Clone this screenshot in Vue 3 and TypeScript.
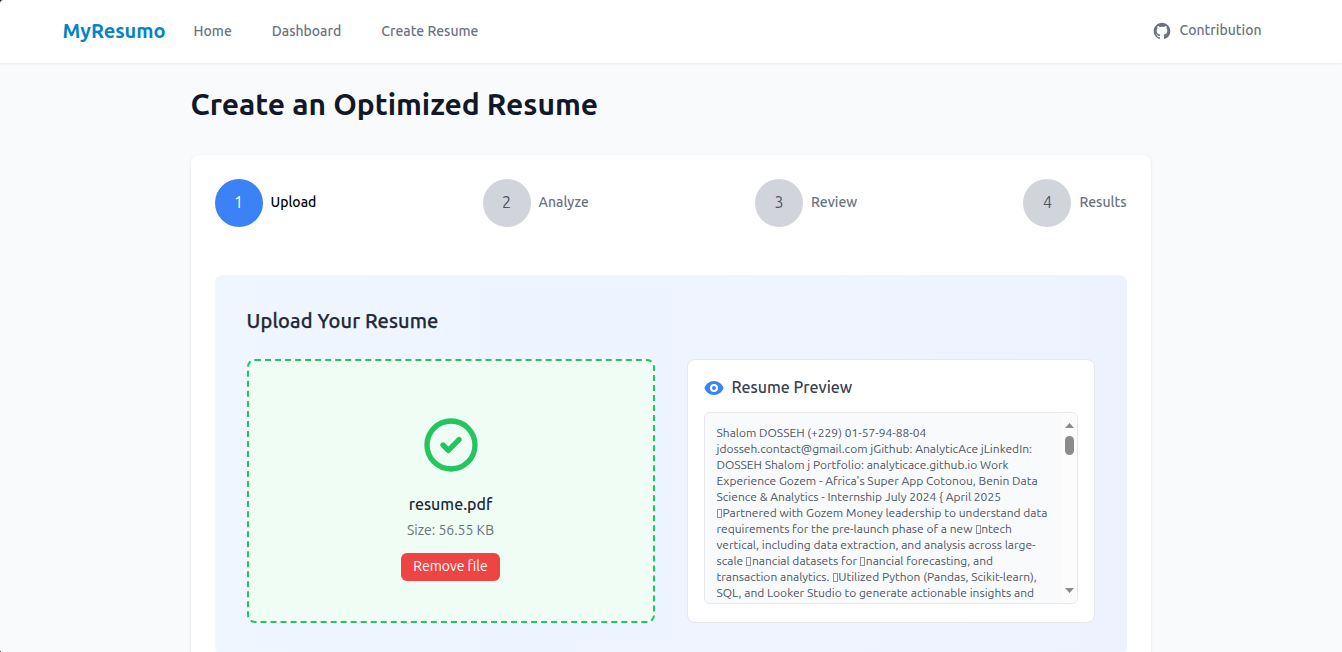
<script setup lang="ts">
interface Step { id: number; label: string; active: boolean }

const links: string[] = ['Home', 'Dashboard', 'Create Resume']

const steps: Step[] = [
  { id: 1, label: 'Upload', active: true },
  { id: 2, label: 'Analyze', active: false },
  { id: 3, label: 'Review', active: false },
  { id: 4, label: 'Results', active: false },
]

// "|" marks a character the extracted text has no glyph for.
const lines: string[] = [
  'Shalom DOSSEH (+229) 01-57-94-88-04',
  'jdosseh.contact@gmail.com jGithub: AnalyticAce jLinkedIn:',
  'DOSSEH Shalom j Portfolio: analyticace.github.io Work',
  "Experience Gozem - Africa's Super App Cotonou, Benin Data",
  'Science & Analytics - Internship July 2024 { April 2025',
  '|Partnered with Gozem Money leadership to understand data',
  'requirements for the pre-launch phase of a new |ntech',
  'vertical, including data extraction, and analysis across large-',
  'scale |nancial datasets for |nancial forecasting, and',
  'transaction analytics. |Utilized Python (Pandas, Scikit-learn),',
  'SQL, and Looker Studio to generate actionable insights and',
]
</script>

<template>
  <div class="page">
    <i class="corner top"></i>
    <i class="corner bottom"></i>
    <nav class="nav">
      <span class="brand">MyResumo</span>
      <div class="links">
        <a v-for="l in links" :key="l">{{ l }}</a>
      </div>
      <a class="contrib">
        <svg width="20" height="20" viewBox="0 0 24 24" fill="currentColor">
          <path fill-rule="evenodd" clip-rule="evenodd" d="M12 2C6.477 2 2 6.484 2 12.017c0 4.425 2.865 8.18 6.839 9.504.5.092.682-.217.682-.483 0-.237-.008-.868-.013-1.703-2.782.605-3.369-1.343-3.369-1.343-.454-1.158-1.11-1.466-1.11-1.466-.908-.62.069-.608.069-.608 1.003.07 1.531 1.032 1.531 1.032.892 1.53 2.341 1.088 2.91.832.092-.647.35-1.088.636-1.338-2.22-.253-4.555-1.113-4.555-4.951 0-1.093.39-1.988 1.029-2.688-.103-.253-.446-1.272.098-2.65 0 0 .84-.27 2.75 1.026A9.564 9.564 0 0112 6.844c.85.004 1.705.115 2.504.337 1.909-1.296 2.747-1.027 2.747-1.027.546 1.379.202 2.398.1 2.651.64.7 1.028 1.595 1.028 2.688 0 3.848-2.339 4.695-4.566 4.943.359.309.678.92.678 1.855 0 1.338-.012 2.419-.012 2.747 0 .268.18.58.688.482A10.019 10.019 0 0022 12.017C22 6.484 17.522 2 12 2z" />
        </svg>
        <span>Contribution</span>
      </a>
    </nav>

    <main class="main">
      <h1>Create an Optimized Resume</h1>
      <section class="card">
        <ol class="steps">
          <li v-for="s in steps" :key="s.id" :class="{ active: s.active }">
            <span class="dot">{{ s.id }}</span>
            <span class="label">{{ s.label }}</span>
          </li>
        </ol>

        <div class="panel">
          <h2>Upload Your Resume</h2>
          <div class="cols">
            <div class="drop">
              <svg width="64" height="64" viewBox="0 0 24 24" fill="none" stroke="currentColor" stroke-width="2" stroke-linecap="round" stroke-linejoin="round">
                <path d="M9 12l2 2 4-4m6 2a9 9 0 11-18 0 9 9 0 0118 0z" />
              </svg>
              <p class="file">resume.pdf</p>
              <p class="size">Size: 56.55 KB</p>
              <button class="remove">Remove file</button>
            </div>

            <div class="preview">
              <h3>
                <svg width="20" height="20" viewBox="0 0 20 20" fill="currentColor">
                  <path d="M10 12a2 2 0 100-4 2 2 0 000 4z" />
                  <path fill-rule="evenodd" clip-rule="evenodd" d="M.458 10C1.732 5.943 5.522 3 10 3s8.268 2.943 9.542 7c-1.274 4.057-5.064 7-9.542 7S1.732 14.057.458 10zM14 10a4 4 0 11-8 0 4 4 0 018 0z" />
                </svg>
                <span>Resume Preview</span>
              </h3>
              <div class="text">
                <div class="lines">
                  <div v-for="(line, i) in lines" :key="i" class="line">
                    <template v-for="(part, j) in line.split('|')" :key="j"><i v-if="j > 0" class="tofu"></i><span>{{ part }}</span></template>
                  </div>
                </div>
                <div class="bar">
                  <svg width="9" height="5" viewBox="0 0 9 5"><path d="M4.5 0L9 5H0z" fill="#8b8b8b" /></svg>
                  <span class="thumb"></span>
                  <svg class="down" width="9" height="5" viewBox="0 0 9 5"><path d="M0 0H9L4.5 5z" fill="#8b8b8b" /></svg>
                </div>
              </div>
            </div>
          </div>
        </div>
      </section>
    </main>
  </div>
</template>

<style>
body { margin: 0; overflow: hidden; }
</style>

<style scoped>
.page {
  position: relative;
  height: 652px;
  overflow: hidden;
  background: #f9fafb;
  font-family: Ubuntu, "Noto Sans", sans-serif;
  font-size: 14px;
  color: #6b7280;
}
.page span, .page a { white-space: pre; }
.corner { position: absolute; left: 0; width: 3px; height: 3px; z-index: 2; }
.top { top: 0; background: radial-gradient(circle at 100% 100%, transparent 2.4px, #222 3.4px); }
.bottom { bottom: 0; height: 1px; width: 1px; background: #555; }
.nav {
  position: relative;
  box-sizing: border-box;
  height: 63px;
  padding: 0 80.5px 0 62.5px;
  display: flex;
  align-items: center;
  background: #fff;
  box-shadow: 0 1px 2px rgba(0, 0, 0, 0.07);
}
.brand { font-size: 20px; font-weight: 600; color: #0284c7; line-height: 28px; margin-top: -1px; }
.links { display: flex; gap: 40px; margin: -1px 0 0 28px; }
.links, .contrib { font-weight: 500; line-height: 20px; }
.contrib { display: flex; gap: 8px; margin: -1px 0 0 auto; align-items: center; }
.contrib span { margin-top: -2px; }
.main { width: 960px; margin-left: 190.5px; }
h1, h2, h3, p, ol { margin: 0; padding: 0; }
h1 { padding-top: 23px; font-size: 30px; line-height: 36px; font-weight: 600; color: #111827; }
.card {
  margin-top: 33px;
  height: 560px;
  padding: 24px;
  border-radius: 8px;
  background: #fff;
  box-shadow: 0 1px 3px rgba(0, 0, 0, 0.1), 0 1px 2px -1px rgba(0, 0, 0, 0.1);
  box-sizing: border-box;
}
.steps { display: flex; justify-content: space-between; list-style: none; }
.steps li { display: flex; align-items: center; gap: 8px; font-weight: 500; }
.label { margin-top: -2px; line-height: 20px; }
.dot {
  width: 48px;
  height: 48px;
  border-radius: 50%;
  background: #d1d5db;
  color: #4b5563;
  font-size: 16px;
  font-weight: 400;
  line-height: 46px;
  text-align: center;
}
.active { color: #000; }
.active .dot { background: #3b82f6; color: #fff; }
.panel {
  margin-top: 48px;
  padding: 32px;
  border-radius: 8px;
  background: linear-gradient(to right, #eff6ff, #eef2ff);
}
h2 { font-size: 20px; line-height: 28px; font-weight: 500; letter-spacing: 0.12px; color: #1f2937; -webkit-text-stroke: 0.25px #1f2937; }
.cols { display: grid; grid-template-columns: 1fr 1fr; gap: 32px; margin-top: 24px; }
.drop {
  box-sizing: border-box;
  height: 264px;
  border: 2px dashed #22c55e;
  border-radius: 8px;
  background: #f0fdf4;
  color: #22c55e;
  display: flex;
  flex-direction: column;
  align-items: center;
  padding-top: 52px;
}
.drop svg { display: block; }
.file { margin-top: 15px; font-size: 16px; line-height: 24px; font-weight: 500; color: #1f2937; }
.size { margin-top: 4px; line-height: 20px; color: #6b7280; }
.remove {
  margin-top: 13px;
  padding: 3px 12px 5px;
  border: 0;
  border-radius: 6px;
  background: #ef4444;
  color: #fff;
  font: inherit;
  line-height: 20px;
}
.preview {
  box-sizing: border-box;
  height: 264px;
  padding: 15px 16px;
  border: 1px solid #e5e7eb;
  border-radius: 8px;
  background: #fff;
}
h3 { display: flex; align-items: center; gap: 8px; height: 24px; font-size: 16px; line-height: 24px; font-weight: 500; color: #374151; }
h3 svg { color: #3b82f6; margin-top: 2px; }
.text {
  box-sizing: border-box;
  display: flex;
  justify-content: space-between;
  height: 192px;
  margin-top: 13px;
  border: 1px solid #e5e7eb;
  border-radius: 6px;
  background: #f9fafb;
  overflow: hidden;
}
.lines { padding: 12px 0 0 12px; font-size: 12px; line-height: 16px; color: #4b5563; }
.line { height: 16px; }
.tofu { display: inline-block; box-sizing: border-box; width: 5px; height: 9px; margin: 0 0.5px; border: 1px solid #8b919c; vertical-align: -1px; }
.bar {
  box-sizing: border-box;
  width: 15px;
  padding: 10px 0;
  display: flex;
  flex-direction: column;
  align-items: center;
  background: #fcfcfc;
}
.thumb { width: 9px; height: 19px; margin-top: 8px; border-radius: 5px; background: #8b8b8b; }
.down { margin-top: auto; }
</style>
